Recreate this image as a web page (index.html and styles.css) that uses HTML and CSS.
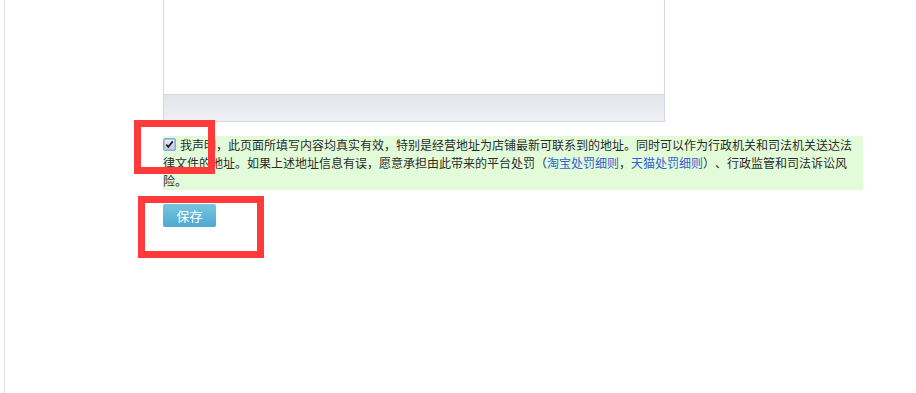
FILE: index.html
```html
<!DOCTYPE html>
<html lang="zh-CN">
<head>
<meta charset="utf-8">
<title>地址声明</title>
<link rel="stylesheet" href="styles.css">
</head>
<body>
<div class="page">
  <div class="editor">
    <div class="editor-body"></div>
    <div class="editor-foot"></div>
  </div>
  <div class="notice">
    <span class="check"><svg width="13" height="13" viewBox="0 0 13 13"><defs><linearGradient id="cg" x1="0" y1="0" x2="0" y2="1"><stop offset="0" stop-color="#e9ebee"/><stop offset="1" stop-color="#c9ccd2"/></linearGradient></defs><rect x="0.5" y="0.5" width="12" height="12" rx="1.5" fill="#a9c4ea" stroke="#86a8dc"/><rect x="2" y="2" width="9" height="9" fill="url(#cg)"/><path d="M3.2 6.6 L5.3 8.8 L9.8 3.4" fill="none" stroke="#222" stroke-width="1.8"/></svg></span>我声明，此页面所填写内容均真实有效，特别是经营地址为店铺最新可联系到的地址。同时可以作为行政机关和司法机关送达法律文件的地址。如果上述地址信息有误，愿意承担由此带来的平台处罚（<a class="link" href="#">淘宝处罚细则</a>，<a class="link" href="#">天猫处罚细则</a>）、行政监管和司法诉讼风险。
  </div>
  <button class="save" type="button">保存</button>
</div>
<div class="mark mark-check"></div>
<div class="mark mark-save"></div>
</body>
</html>
```
FILE: styles.css
```css
html, body {
  margin: 0;
  padding: 0;
  background: #fff;
}
body {
  font-family: "Noto Sans CJK SC", "Liberation Sans", sans-serif;
  font-size: 12px;
  color: #333;
  overflow: hidden;
  text-spacing-trim: space-all;
}
.page {
  margin-left: 4px;
  border-left: 1px solid #e0e0e0;
  min-height: 393px;
  padding-left: 158px;
  box-sizing: border-box;
}
.editor {
  width: 502px;
  box-sizing: border-box;
  border: 1px solid #d3d7e1;
  border-top: 0;
}
.editor-body {
  height: 94px;
  background: #fff;
}
.editor-foot {
  height: 26px;
  border-top: 1px solid #d3d7e1;
  background: linear-gradient(#e5e6eb, #eef0f3);
}
.notice {
  margin-top: 14px;
  width: 700px;
  height: 54px;
  background: #e2fbd9;
  line-height: 18px;
  color: #2b2b2b;
  text-spacing-trim: space-all;
}
.check {
  display: inline-block;
  width: 13px;
  height: 13px;
  margin-right: 4px;
  vertical-align: -1px;
}
.check svg {
  display: block;
}
.link {
  color: #2f5fd0;
  text-decoration: none;
}
.save {
  display: block;
  margin-top: 14px;
  width: 53px;
  height: 23px;
  padding: 0;
  border: 0;
  border-radius: 2px;
  background: linear-gradient(#76c6de, #4ea8d2);
  color: #fff;
  font-family: "Noto Sans CJK SC", "Liberation Sans", sans-serif;
  font-size: 13px;
  line-height: 23px;
  text-align: center;
}
.mark {
  position: absolute;
  border: 7px solid #fe3a3a;
  box-sizing: border-box;
}
.mark-check {
  left: 134px;
  top: 120px;
  width: 81px;
  height: 54px;
}
.mark-save {
  left: 138px;
  top: 196px;
  width: 126px;
  height: 62px;
}
```
